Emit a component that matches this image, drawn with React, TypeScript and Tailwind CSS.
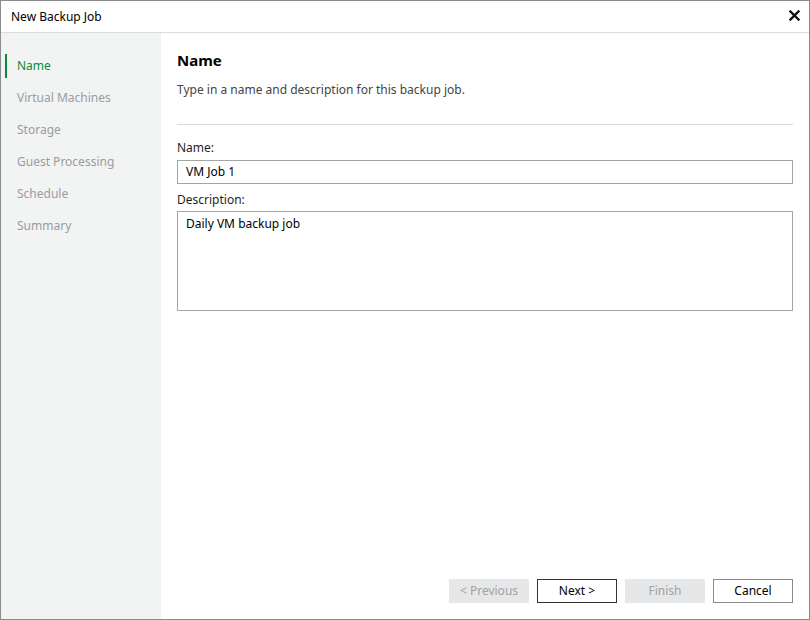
import React from "react";

const steps = ["Name", "Virtual Machines", "Storage", "Guest Processing", "Schedule", "Summary"];

export default function App() {
  return (
    <div
      className="w-[810px] h-[620px] bg-white border border-[#8c8c8c] flex flex-col text-[12px] leading-[16px] text-[#1f1f1f]"
      style={{ fontFamily: '"Segoe UI", "Noto Sans", sans-serif' }}
    >
      {/* Title bar */}
      <div className="h-[32px] shrink-0 flex items-center justify-between pl-[10px] pr-[9px] border-b border-[#dcdcdc]">
        <span className="text-[12px] text-black">New Backup Job</span>
        <svg width="11" height="11" viewBox="0 0 11 11" className="mt-[-3px]">
          <path d="M1.5 1.5 L9.5 9.5 M9.5 1.5 L1.5 9.5" stroke="#111" strokeWidth="2.4" strokeLinecap="square" />
        </svg>
      </div>

      <div className="flex flex-1 min-h-0">
        {/* Sidebar */}
        <div className="w-[160px] shrink-0 bg-[#f2f3f3] pt-[17px] pl-[4px]">
          {steps.map((s, i) => (
            <div key={s} className="h-[32px] flex items-center">
              <div className={`w-[2px] h-[24px] ${i === 0 ? "bg-[#0c8a3a]" : "bg-transparent"}`} />
              <span className={`ml-[10px] ${i === 0 ? "text-[#0c8a3a]" : "text-[#9a9c9e]"}`}>{s}</span>
            </div>
          ))}
        </div>

        {/* Content */}
        <div className="flex-1 flex flex-col pl-[16px] pr-[16px] pt-[17px] pb-[16px]">
          <div className="text-[15px] font-bold text-black leading-[20px]">Name</div>
          <div className="mt-[12px] text-[#444]">Type in a name and description for this backup job.</div>
          <div className="mt-[26px] h-px bg-[#d9d9d9]" />
          <div className="mt-[15px] text-[#1f1f1f]">Name:</div>
          <div className="mt-[4px] h-[24px] border border-[#a3a6a8] flex items-center px-[8px] text-black">VM Job 1</div>
          <div className="mt-[8px]">Description:</div>
          <div className="mt-[3px] h-[100px] border border-[#a3a6a8] px-[8px] pt-[4px] text-black">Daily VM backup job</div>

          <div className="mt-auto flex justify-end gap-[8px]">
            <button className="w-[80px] h-[24px] bg-[#e6e7e8] text-[#a0a2a4]">&lt; Previous</button>
            <button className="w-[80px] h-[24px] border border-[#333] bg-white text-black">Next &gt;</button>
            <button className="w-[80px] h-[24px] bg-[#e6e7e8] text-[#a0a2a4]">Finish</button>
            <button className="w-[80px] h-[24px] border border-[#8c8c8c] bg-white text-black">Cancel</button>
          </div>
        </div>
      </div>
    </div>
  );
}
